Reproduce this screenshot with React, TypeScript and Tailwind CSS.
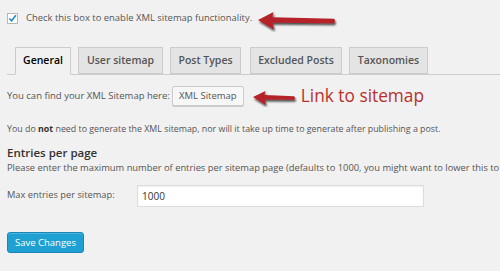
import React from "react";

const font = { fontFamily: '"Open Sans", "Noto Sans", sans-serif' };

function Arrow({ w, h }: { w: number; h: number }) {
  return (
    <svg width={w} height={h} viewBox={`0 0 ${w} ${h}`}>
      <defs>
        <filter id={`s${w}`} x="-20%" y="-40%" width="140%" height="200%">
          <feGaussianBlur in="SourceAlpha" stdDeviation="1.2" />
          <feOffset dx="1" dy="2" result="b" />
          <feComponentTransfer>
            <feFuncA type="linear" slope="0.7" />
          </feComponentTransfer>
          <feMerge>
            <feMergeNode />
            <feMergeNode in="SourceGraphic" />
          </feMerge>
        </filter>
      </defs>
      <g filter={`url(#s${w})`}>
        <path
          d={`M1 ${h * 0.45} L${h * 0.75} 2 L${h * 0.7} ${h * 0.33} L${w - 3} ${h * 0.4} Q${w - 1} ${h * 0.5} ${w - 3} ${h * 0.6} L${h * 0.7} ${h * 0.58} L${h * 0.78} ${h * 0.9} Z`}
          fill="#b5232b"
        />
      </g>
    </svg>
  );
}

export default function App() {
  return (
    <div className="w-[500px] h-[271px] bg-[#f1f1f1] overflow-hidden relative text-[#444]" style={font}>
      <div className="flex items-center pl-[7px] pt-[12px] h-[24px]">
        <div className="w-[11px] h-[11px] bg-white border border-[#b4b9be] flex items-center justify-center">
          <svg width="9" height="9" viewBox="0 0 10 10">
            <path d="M1.5 5 L4 7.5 L8.8 1.5" stroke="#1e8cbe" strokeWidth="1.8" fill="none" />
          </svg>
        </div>
        <span className="ml-[8px] text-[9.45px] text-[#555]">Check this box to enable XML sitemap functionality.</span>
      </div>
      <div className="absolute left-[257px] top-[10px]">
        <Arrow w={80} h={22} />
      </div>

      <div className="mt-[23px] ml-[7px] border-b border-[#ccc] h-[28px] flex items-end pl-[8px] gap-[7px]">
        <div className="h-[28px] w-[56px] border border-[#ccc] border-b-[#f1f1f1] bg-[#f1f1f1] flex items-center justify-center text-[10.5px] font-semibold text-[#000] mb-[-1px]">General</div>
        <div className="h-[27px] w-[85px] border border-[#ccc] bg-[#e4e4e4] flex items-center justify-center text-[10.5px] font-semibold text-[#555]">User sitemap</div>
        <div className="h-[27px] w-[71px] border border-[#ccc] bg-[#e4e4e4] flex items-center justify-center text-[10.5px] font-semibold text-[#555]">Post Types</div>
        <div className="h-[27px] w-[92px] border border-[#ccc] bg-[#e4e4e4] flex items-center justify-center text-[10.5px] font-semibold text-[#555] ml-[2px]">Excluded Posts</div>
        <div className="h-[27px] w-[79px] border border-[#ccc] bg-[#e4e4e4] flex items-center justify-center text-[10.5px] font-semibold text-[#555]">Taxonomies</div>
      </div>

      <div className="flex items-center pl-[7px] mt-[11px] h-[20px]">
        <span className="text-[9.5px] text-[#555]">You can find your XML Sitemap here:</span>
        <div className="ml-[2px] h-[20px] w-[72px] bg-[#f7f7f7] border border-[#ccc] rounded-[2px] flex items-center justify-center text-[9.5px] text-[#555] shadow-[0_1px_0_#ccc]">XML Sitemap</div>
        <div className="ml-[8px] mt-[4px]">
          <Arrow w={45} h={18} />
        </div>
        <span className="ml-[4px] text-[17.3px] text-[#b7312c] leading-none">Link to sitemap</span>
      </div>

      <div className="pl-[7px] mt-[17px] text-[8.85px] text-[#555] whitespace-nowrap">
        You do <b className="font-bold text-[#333]">not</b> need to generate the XML sitemap, nor will it take up time to generate after publishing a post.
      </div>

      <div className="pl-[7px] mt-[9px] text-[11.5px] font-semibold text-[#333] leading-[16px]">Entries per page</div>
      <div className="pl-[7px] text-[9.35px] text-[#555] whitespace-nowrap leading-[14px] overflow-hidden">
        Please enter the maximum number of entries per sitemap page (defaults to 1000, you might want to lower this to
      </div>

      <div className="flex pl-[7px] mt-[10px]">
        <span className="w-[130px] text-[9.3px] text-[#555] pt-[3px]">Max entries per sitemap:</span>
        <div className="w-[287px] h-[22px] bg-white border border-[#ddd] shadow-[inset_0_1px_2px_rgba(0,0,0,0.07)] flex items-center pl-[4px] text-[10px] text-[#333]">1000</div>
      </div>

      <div className="pl-[7px] mt-[25px]">
        <div className="w-[77px] h-[21px] bg-[#1fa0d3] border border-[#1a86b8] rounded-[3px] flex items-center justify-center text-white text-[9.5px] shadow-[inset_0_1px_0_rgba(120,200,230,0.5)]">Save Changes</div>
      </div>
    </div>
  );
}
